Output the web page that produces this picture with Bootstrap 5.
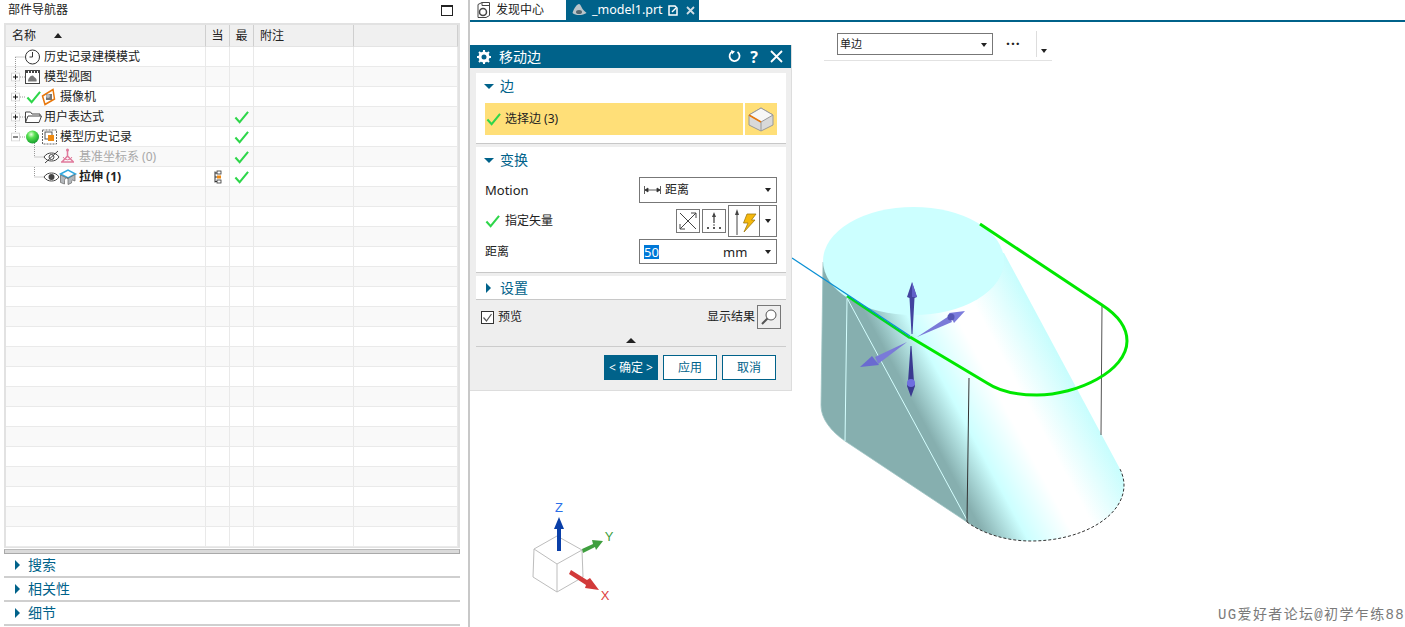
<!DOCTYPE html>
<html lang="zh">
<head>
<meta charset="utf-8">
<title>部件导航器</title>
<link href="https://cdn.jsdelivr.net/npm/bootstrap@5.3.0/dist/css/bootstrap.min.css" rel="stylesheet">
<style>
:root{--nx:#00628a;}
html,body{height:627px;overflow:hidden;background:#fff;}
body{font:12px/20px "Noto Sans","Noto Sans CJK SC",sans-serif;color:#222;}
.nav-pane{width:470px;height:627px;border-right:2px solid #c8c8c8;padding-left:4px;flex:none;}
.pane-head{flex:none;height:23px;width:456px;padding:0 0 3px 4px;}
.pane-max{width:12px;height:11px;border:1px solid #222;border-top-width:2px;margin-right:7px;}
.tree-box{flex:none;width:456px;border:2px solid #e2e2e2;border-bottom-width:1px;}
.tree-table{table-layout:fixed;width:452px;border-collapse:separate;border-spacing:0;margin:0;}
.tree-table th,.tree-table td{height:20px;padding:0;border:0;border-right:1px solid #e9e9e9;border-bottom:1px solid #eaeaea;font-weight:400;white-space:nowrap;overflow:hidden;vertical-align:middle;box-shadow:none;background:transparent;color:#222;}
.tree-table thead th{height:21px;padding-top:1px;background:#f0f0f0;border-right:1px solid #cfcfcf;border-bottom:1px solid #e4e4e4;text-align:center;}
.tree-table thead th.head-name{text-align:left;padding-left:6px;}
.tree-table thead th.head-note{text-align:left;padding-left:6px;}
.tree-table tbody tr:nth-child(even) td{background:#f9f9f9;}
.sort-up{display:inline-block;border:4px solid transparent;border-bottom:5px solid #222;border-top:0;margin-left:18px;vertical-align:2px;}
.tree-cell{display:flex;align-items:center;height:19px;}
.tree-cell svg,.cell-mid svg{display:block;flex:none;}
.cell-mid{display:flex;justify-content:center;align-items:center;height:19px;}
.muted-node{color:#a8a8a8;}
.strong-node{font-weight:700;}
.split-bar{flex:none;width:456px;height:5px;background:#dadada;border:1px solid #a9a9a9;border-top-color:#bbb;margin-top:1px;}
.fold-stack{width:456px;}
.fold-row{height:24px;border-bottom:2px solid #cfcfcf;color:var(--nx);font-size:14px;line-height:22px;padding-left:11px;gap:8px;}
.tri-right{display:inline-block;border:5px solid transparent;border-left:5px solid var(--nx);border-right:0;}
.tri-down{display:inline-block;border:5px solid transparent;border-top:5px solid var(--nx);border-bottom:0;}
.work-area{flex:1 1 auto;height:627px;position:relative;overflow:hidden;}
.tab-strip{height:22px;border-bottom:2px solid var(--nx);font-size:12px;line-height:20px;padding-left:6px;}
.tab-plain{width:90px;gap:4px;}
.tab-on{width:133px;height:20px;background:var(--nx);color:#fff;padding-left:6px;}
.tab-on .tab-name{margin-left:5px;width:76px;font-size:12.5px;}
.gfx-canvas{display:block;position:absolute;left:0;top:22px;width:935px;height:605px;}
.tool-float{position:absolute;left:354px;top:31px;width:228px;height:30px;border-bottom:1px solid #e2e2e2;}
.tool-select{position:absolute;left:13px;top:2px;width:156px;height:22px;border:1px solid #777;padding-left:2px;font-size:11px;line-height:20px;}
.caret-dn{position:absolute;border:3.5px solid transparent;border-top:4px solid #222;border-bottom:0;width:0;height:0;}
.tool-select .caret-dn{right:5px;top:9px;}
.tool-dots{position:absolute;left:182px;top:6px;width:16px;height:14px;font-size:14px;line-height:14px;letter-spacing:1px;font-weight:700;}
.tool-sep{position:absolute;left:212px;top:0;height:26px;width:1px;background:#ddd;}
.dlg{position:absolute;left:0;top:45px;width:322px;height:346px;background:#eee;border:1px solid #ddd;border-top:0;border-left:0;}
.dlg-title{height:23px;background:var(--nx);color:#fff;font-size:14px;padding:0 8px 0 7px;}
.dlg-title .t{margin-left:8px;}
.dlg-sec{margin:0 5px 0 6px;background:#fff;border-bottom:1px solid #c8c8c8;}
.dlg-sec-head{color:var(--nx);font-size:14px;height:26px;padding-left:8px;gap:6px;}
.sel-row{padding:4px 9px 0;height:44px;gap:2px;}
.sel-main{width:258px;height:32px;background:#ffdf78;padding-left:1px;gap:4px;}
.sel-btn{width:32px;height:32px;background:#ffdf78;}
.field-row{padding:0 9px;height:30px;}
.field-box{width:138px;height:26px;border:1px solid #777;position:relative;padding-left:4px;}
.field-box .caret-dn{right:5px;top:10px;}
.sel-text{background:#0078d7;color:#fff;font-size:13px;line-height:14px;padding:0;}
.unit-t{position:absolute;left:83px;font-size:13px;}
.vec-btn{width:24px;height:24px;border:1px solid #777;background:#fff;}
.vec-combo{width:49px;height:32px;border:1px solid #777;margin-left:2px;position:relative;}
.vec-combo .cut{position:absolute;left:30px;top:0;bottom:0;border-left:1px solid #777;}
.vec-combo .caret-dn{right:5px;top:13px;}
.dlg-foot{padding:5px 10px 0 11px;height:34px;}
.foot-side{height:24px;}
.check-box{width:13px;height:13px;border:1px solid #333;background:#fff;}
.show-btn{width:24px;height:24px;border:1px solid #777;background:#eee;margin-left:2px;}
.more-tri{height:12px;}
.more-tri i{display:block;border:5px solid transparent;border-bottom:5px solid #222;border-top:0;}
.foot-sep{margin:0 5px 0 6px;border-top:1px solid #ccc;}
.dlg-act{padding:8px 15px 0 0;gap:5px;}
.act-btn{width:54px;height:25px;border-radius:0;border:1px solid var(--nx);background:#fff;color:var(--nx);font-size:12px;line-height:23px;padding:0;}
.act-on{background:var(--nx);color:#fff;}
.brand-mark{position:absolute;right:0;bottom:2px;font:14px/20px "Liberation Mono","Noto Sans CJK SC",monospace;color:#7a7a7a;letter-spacing:1.35px;}
</style>
</head>
<body class="d-flex">

<svg width="0" height="0" class="position-absolute">
<defs>
<symbol id="tick" viewBox="0 0 16 14"><path d="M1.500 7.500 6 12.500 15 1.500" fill="none" stroke="#2ed64a" stroke-width="2.200"/></symbol>
<symbol id="plus-box" viewBox="0 0 9 9"><rect x=".5" y=".5" width="8" height="8" fill="#fff" stroke="#d4d4d4"/><path d="M2 4.500h5M4.500 2v5" stroke="#111"/></symbol>
<symbol id="minus-box" viewBox="0 0 9 9"><rect x=".5" y=".5" width="8" height="8" fill="#fff" stroke="#d4d4d4"/><path d="M2 4.500h5" stroke="#111"/></symbol>
<radialGradient id="ball" cx=".4" cy=".3" r=".8"><stop offset="0" stop-color="#e8ffe0"/><stop offset=".35" stop-color="#55e04f"/><stop offset="1" stop-color="#0a8f28"/></radialGradient>
<linearGradient id="solid" gradientUnits="userSpaceOnUse" x1="867" y1="317" x2="1001" y2="245"><stop offset="0" stop-color="#86afaf"/><stop offset=".24" stop-color="#ccffff"/><stop offset=".52" stop-color="#fff"/><stop offset=".66" stop-color="#fff"/><stop offset="1" stop-color="#c6fdfd"/></linearGradient>
</defs>
</svg>

<aside class="nav-pane d-flex flex-column">
  <div class="pane-head d-flex align-items-center justify-content-between"><span>部件导航器</span><span class="pane-max"></span></div>
  <div class="tree-box">
  <table class="table tree-table">
    <colgroup><col style="width:200px"><col style="width:24px"><col style="width:24px"><col style="width:100px"><col style="width:104px"></colgroup>
    <thead><tr><th class="head-name">名称<span class="sort-up"></span></th><th>当</th><th>最</th><th class="head-note">附注</th><th></th></tr></thead>
    <tbody>
      <tr><td><div class="tree-cell">
        <svg width="38" height="20"><path d="M9.500 10V20M9.500 10H19" stroke="#999" stroke-dasharray="1 1" fill="none"/><circle cx="26.500" cy="10" r="7" fill="#fff" stroke="#333"/><path d="M26.500 5v5h-3" fill="none" stroke="#333"/></svg><span>历史记录建模模式</span></div></td><td></td><td></td><td></td><td></td></tr>
      <tr><td><div class="tree-cell">
        <svg width="38" height="20"><path d="M9.500 0V6M14 10H19" stroke="#999" stroke-dasharray="1 1" fill="none"/><path d="M9.500 14V20" stroke="#999" stroke-dasharray="1 1"/><use href="#plus-box" x="5" y="5.500" width="9" height="9"/><rect x="19.500" y="3.500" width="14" height="13" fill="#fff" stroke="#444"/><path d="M20 5h13" stroke="#444" stroke-width="2" stroke-dasharray="2 1"/><path d="M22 14.500c0-3 2.500-6 4.500-6 1 0 1.500 1.500 3 2.500 1 1 1.500 2 1 3.500z" fill="#777"/></svg><span>模型视图</span></div></td><td></td><td></td><td></td><td></td></tr>
      <tr><td><div class="tree-cell">
        <svg width="54" height="20"><path d="M9.500 0V6M14 10H19M9.500 14V20" stroke="#999" stroke-dasharray="1 1" fill="none"/><use href="#plus-box" x="5" y="5.500" width="9" height="9"/><use href="#tick" x="20" y="3" width="15" height="14"/><path d="M36.500 9 47 2.500 48.500 12 39 17.500z" fill="#fff" stroke="#e8780c" stroke-width="1.500"/><rect x="40" y="7" width="6" height="6" fill="#777"/><circle cx="42" cy="9" r="2" fill="#bbb"/></svg><span>摄像机</span></div></td><td></td><td></td><td></td><td></td></tr>
      <tr><td><div class="tree-cell">
        <svg width="38" height="20"><path d="M9.500 0V6M14 10H19M9.500 14V20" stroke="#999" stroke-dasharray="1 1" fill="none"/><use href="#plus-box" x="5" y="5.500" width="9" height="9"/><path d="M19.500 15.500V5h5l1.500 2h8v2M19.500 15.500 22 9h13.500l-2.500 6.500z" fill="#fff" stroke="#444"/></svg><span>用户表达式</span></div></td><td></td><td><div class="cell-mid"><svg width="15" height="14"><use href="#tick" width="15" height="14"/></svg></div></td><td></td><td></td></tr>
      <tr><td><div class="tree-cell">
        <svg width="54" height="20"><path d="M9.500 0V6M14 10H19M28.500 16V20" stroke="#999" stroke-dasharray="1 1" fill="none"/><use href="#minus-box" x="5" y="5.500" width="9" height="9"/><circle cx="26.500" cy="10" r="6.500" fill="url(#ball)"/><rect x="36.500" y="3" width="14" height="14" fill="#fff" stroke="#666" stroke-dasharray="2 1"/><rect x="39" y="5" width="7" height="7" fill="#fff" stroke="#555"/><rect x="42" y="8" width="6" height="6" fill="#ef8a12"/></svg><span>模型历史记录</span></div></td><td></td><td><div class="cell-mid"><svg width="15" height="14"><use href="#tick" width="15" height="14"/></svg></div></td><td></td><td></td></tr>
      <tr><td><div class="tree-cell">
        <svg width="73" height="20"><path d="M28.500 0V10H38" stroke="#999" stroke-dasharray="1 1" fill="none"/><path d="M38 10c2-3 4.500-4 7.500-4s5.500 1 7.500 4c-2 3-4.500 4-7.500 4s-5.500-1-7.500-4z" fill="#fff" stroke="#444"/><circle cx="45.500" cy="10" r="2.500" fill="none" stroke="#444"/><path d="M39 16 52 4" stroke="#444"/><path d="M61.500 3v6M61.500 9 56 15M61.500 9l6 6M55 15h13" stroke="#e07a9c" stroke-width="1.500" fill="none"/><circle cx="61.500" cy="3" r="1.500" fill="#e07a9c"/><path d="M57 10a5 5 0 0 0 9 0" fill="none" stroke="#e07a9c"/></svg><span class="muted-node">基准坐标系 (0)</span></div></td><td></td><td><div class="cell-mid"><svg width="15" height="14"><use href="#tick" width="15" height="14"/></svg></div></td><td></td><td></td></tr>
      <tr><td><div class="tree-cell">
        <svg width="73" height="20"><path d="M28.500 0V10H38" stroke="#999" stroke-dasharray="1 1" fill="none"/><path d="M38 10c2-3 4.500-4 7.500-4s5.500 1 7.500 4c-2 3-4.500 4-7.500 4s-5.500-1-7.500-4z" fill="#fff" stroke="#444"/><circle cx="45.500" cy="10" r="3" fill="#444"/><path d="M54.500 7 62 3l7.500 4-7.500 4z" fill="#fff" stroke="#2ea8e0" stroke-width="1.500"/><path d="M54.500 8v7.500l4 1.500v-3.500c0-2 3.500-4 3.500-2v6l3.500-1.500c0-2 .5-3 1-3l2.500 1v-6.500L62 11.500z" fill="#b4b8bc" stroke="#666" stroke-width=".7"/></svg><span class="strong-node">拉伸 (1)</span></div></td><td><div class="cell-mid"><svg width="8" height="14"><path d="M1 1.500V12.500M1 3h2M1 7h2M1 11.500h2" stroke="#333" fill="none"/><rect x="3" y="1" width="4" height="3" fill="#fff" stroke="#333" stroke-width=".8"/><rect x="3" y="5.500" width="4" height="3" fill="#ef8a12"/><rect x="3" y="10" width="4" height="3" fill="#fff" stroke="#333" stroke-width=".8"/></svg></div></td><td><div class="cell-mid"><svg width="15" height="14"><use href="#tick" width="15" height="14"/></svg></div></td><td></td><td></td></tr>
      <tr><td></td><td></td><td></td><td></td><td></td></tr><tr><td></td><td></td><td></td><td></td><td></td></tr>
      <tr><td></td><td></td><td></td><td></td><td></td></tr><tr><td></td><td></td><td></td><td></td><td></td></tr>
      <tr><td></td><td></td><td></td><td></td><td></td></tr><tr><td></td><td></td><td></td><td></td><td></td></tr>
      <tr><td></td><td></td><td></td><td></td><td></td></tr><tr><td></td><td></td><td></td><td></td><td></td></tr>
      <tr><td></td><td></td><td></td><td></td><td></td></tr><tr><td></td><td></td><td></td><td></td><td></td></tr>
      <tr><td></td><td></td><td></td><td></td><td></td></tr><tr><td></td><td></td><td></td><td></td><td></td></tr>
      <tr><td></td><td></td><td></td><td></td><td></td></tr><tr><td></td><td></td><td></td><td></td><td></td></tr>
      <tr><td></td><td></td><td></td><td></td><td></td></tr><tr><td></td><td></td><td></td><td></td><td></td></tr>
      <tr><td></td><td></td><td></td><td></td><td></td></tr><tr><td></td><td></td><td></td><td></td><td></td></tr>
    </tbody>
  </table>
  </div>
  <div class="split-bar"></div>
  <div class="fold-stack">
    <div class="fold-row d-flex align-items-center"><span class="tri-right"></span><span>搜索</span></div>
    <div class="fold-row d-flex align-items-center"><span class="tri-right"></span><span>相关性</span></div>
    <div class="fold-row d-flex align-items-center"><span class="tri-right"></span><span>细节</span></div>
  </div>
</aside>

<main class="work-area">
  <div class="tab-strip d-flex">
    <div class="tab-plain d-flex align-items-center">
      <svg width="16" height="16" viewBox="0 0 16 16"><path d="M2 2.500 6 .5h7.500v13L10 15.500H2z" fill="#fff" stroke="#444"/><path d="M6 .5v3h7.500" fill="none" stroke="#444"/><circle cx="7" cy="10" r="3.500" fill="none" stroke="#444" stroke-width="1.500"/></svg>
      <span>发现中心</span>
    </div>
    <div class="tab-on d-flex align-items-center">
      <svg width="15" height="14" viewBox="0 0 15 14"><path d="M.5 10C2 5 5 1 7 1c1.500 0 2.500 3.500 4 5.500 1 1.500 3 2.500 3.500 3.500-3 2-10 3.500-14 0z" fill="#b9c4c9"/><ellipse cx="7" cy="9" rx="3" ry="2" fill="#55666e"/></svg>
      <span class="tab-name">_model1.prt</span>
      <svg width="10" height="11" viewBox="0 0 10 11"><path d="M1 1h6l2 2v7H1z" fill="none" stroke="#fff" stroke-width="1.500"/><path d="M4 7l4-4" stroke="#fff" stroke-width="1.500"/></svg>
      <svg class="ms-2" width="9" height="9" viewBox="0 0 9 9"><path d="M1 1l7 7M8 1 1 8" stroke="#cfdde4" stroke-width="1.800"/></svg>
    </div>
  </div>

  <svg class="gfx-canvas" viewBox="470 22 935 605">
    <path d="M823 262 821 405c0 14 10 26 24 36L967 522c16 12 40 19 64 19 50 0 93-24 93-56 0-6-2-12-4-16L1004 253 914 240z" fill="url(#solid)"/>
    <path d="M823 262 821 405c0 14 10 26 24 36L967 522" fill="none" stroke="#9dc3c3" stroke-width=".8"/>
    <ellipse cx="913.500" cy="261" rx="90.500" ry="54" fill="#ccffff"/>
    <path d="M847 299 845 441M847 298 967 520" stroke="#d5ffff" stroke-width="1" fill="none"/>
    <path d="M969 378 967 522" stroke="#333" stroke-width="1"/>
    <path d="M1102 306 1101 435" stroke="#555" stroke-width="1"/>
    <path d="M967 522c16 12 40 19 64 19 50 0 93-24 93-56 0-6-2-12-4-16" fill="none" stroke="#333" stroke-width="1" stroke-dasharray="3 2"/>
    <path d="M980 224 1102 305c17 11 25 23 25 36 0 30-50 54-90 54-22 0-38-4-50-12L910 337" fill="none" stroke="#00e800" stroke-width="3"/>
    <path d="M847 296 910 338" fill="none" stroke="#00d820" stroke-width="2.600"/>
    <path d="M792 258 910 336" fill="none" stroke="#0a90d4" stroke-width="1.300"/>
    <path d="M911.500 334 909.500 298 907 297 912 282 917 297 914.500 298 912.500 334z" fill="#43439f"/>
    <path d="M912 282 917 297 912 297z" fill="#6060c8"/>
    <path d="M910.500 346 908 382 907 386 911 397 915 386 914 382 911.500 346z" fill="#3a3a90"/>
    <circle cx="911" cy="383" r="4" fill="#6f6fe0"/>
    <path d="M917 337 949 316 952 322z" fill="#7a7ad8"/>
    <path d="M965 311 949 313 954 323z" fill="#7c7cdc"/>
    <circle cx="951" cy="317" r="3.500" fill="#5757b5"/>
    <path d="M907 342 875 357 878 364z" fill="#7a7ad8"/>
    <path d="M860 367 872 356 879 365z" fill="#6a6ad0"/>

    <path d="M557 536 534 549 533 577 557 592 583 577 582 550zM534 549 557 564 582 550M557 564V592" fill="#fff" stroke="#bdbdbd" stroke-width="1"/>
    <path d="M557 551V529H554L559 517 564 529H561V551z" fill="#0a3fa8"/>
    <path d="M582 549 593 544 592 540 603 541 596 550 595 547 583 553z" fill="#3f9f3f"/>
    <path d="M571 570 587 580 590 578 599 590 585 588 586 585 569 574z" fill="#d23a3a"/>
    <text x="559" y="512" text-anchor="middle" font-family="Liberation Sans" font-size="13" fill="#2a6fe8">Z</text>
    <text x="609" y="541" text-anchor="middle" font-family="Liberation Sans" font-size="13" fill="#3f9f3f">Y</text>
    <text x="605" y="600" text-anchor="middle" font-family="Liberation Sans" font-size="13" fill="#dc4040">X</text>
  </svg>

  <div class="tool-float">
    <div class="tool-select">单边<span class="caret-dn"></span></div>
    <div class="tool-dots">···</div>
    <div class="tool-sep"></div>
    <span class="caret-dn" style="left:217px;top:18px"></span>
  </div>

  <section class="dlg">
    <div class="dlg-title d-flex align-items-center">
      <svg width="14" height="14" viewBox="0 0 14 14"><circle cx="7" cy="7" r="4" fill="none" stroke="#fff" stroke-width="3"/><path d="M7 0v3M7 11v3M0 7h3M11 7h3M2 2l2 2M10 10l2 2M12 2l-2 2M4 10l-2 2" stroke="#fff" stroke-width="2"/></svg>
      <span class="t flex-grow-1">移动边</span>
      <svg width="13" height="13" viewBox="0 0 13 13"><path d="M4.500 1.500A5 5 0 1 0 9.500 2" fill="none" stroke="#fff" stroke-width="1.800"/><path d="M3 0 7 1.500 4 4.500z" fill="#fff"/></svg>
      <span class="fw-bold text-center ms-2" style="font-size:16px;width:10px;margin-right:11px">?</span>
      <svg width="13" height="13" viewBox="0 0 13 13"><path d="M1 1l11 11M12 1 1 12" stroke="#fff" stroke-width="1.800"/></svg>
    </div>
    <div class="dlg-sec" style="height:71px;margin-top:5px">
      <div class="dlg-sec-head d-flex align-items-center"><span class="tri-down"></span><span>边</span></div>
      <div class="sel-row d-flex">
        <div class="sel-main d-flex align-items-center">
          <svg width="15" height="14"><use href="#tick" width="15" height="14"/></svg><span>选择边 (3)</span>
        </div>
        <div class="sel-btn d-flex align-items-center justify-content-center">
          <svg width="26" height="26" viewBox="0 0 26 26"><path d="M13 2 25 9v10L13 25 1 19V9z" fill="#d9d9d9" stroke="#999"/><path d="M13 2 25 9 13 16 1 9z" fill="#f7f7f7" stroke="#999"/><path d="M13 16v9" stroke="#999"/><path d="M1 9l12 7" stroke="#e8780c" stroke-width="1.500"/></svg>
        </div>
      </div>
    </div>
    <div class="dlg-sec" style="height:126px;margin-top:3px">
      <div class="dlg-sec-head d-flex align-items-center"><span class="tri-down"></span><span>变换</span></div>
      <div class="field-row d-flex align-items-center justify-content-between" style="padding-top:4px">
        <span style="font-size:13px">Motion</span>
        <div class="field-box d-flex align-items-center">
          <svg width="17" height="8" viewBox="0 0 17 8" class="me-1"><path d="M.5 0v8M16.500 0v8M1 4h15M1 4l3-2v4zM16 4l-3-2v4z" stroke="#333" stroke-width=".8" fill="#333"/></svg><span>距离</span><span class="caret-dn"></span>
        </div>
      </div>
      <div class="field-row d-flex align-items-center" style="height:36px">
        <svg width="15" height="14" style="margin-right:5px"><use href="#tick" width="15" height="14"/></svg><span class="flex-grow-1">指定矢量</span>
        <div class="vec-btn d-flex align-items-center justify-content-center"><svg width="20" height="20" viewBox="0 0 20 20"><path d="M2 18 18 2M18 2h-5M18 2v5M2 2l16 16M2 18h5M2 18v-5" fill="none" stroke="#444" stroke-width="1"/></svg></div>
        <div class="vec-btn d-flex align-items-center justify-content-center" style="margin-left:2px"><svg width="20" height="20" viewBox="0 0 20 20"><path d="M10 3v9" stroke="#444" stroke-width="1.300"/><path d="M10 1 12 6H8z" fill="#444"/><path d="M3 17h2M9 17h2M15 17h2M10 13.500v1" stroke="#222" stroke-width="1.500"/></svg></div>
        <div class="vec-combo d-flex align-items-center">
          <svg width="29" height="30" viewBox="0 0 29 30"><path d="M8 8v21" stroke="#444" stroke-width="1"/><path d="M8 3 10 9H6z" fill="#444"/><path d="M18 8h9l-4.500 6H26l-11 12 4-9h-4.500z" fill="#f5b80c" stroke="#a07b10" stroke-width=".8"/></svg>
          <span class="cut"></span><span class="caret-dn"></span>
        </div>
      </div>
      <div class="field-row d-flex align-items-start justify-content-between" style="height:26px">
        <span style="line-height:25px">距离</span>
        <div class="field-box d-flex align-items-center" style="height:25px"><span class="sel-text">50</span><span class="unit-t">mm</span><span class="caret-dn"></span></div>
      </div>
    </div>
    <div class="dlg-sec" style="height:24px;margin-top:3px">
      <div class="dlg-sec-head d-flex align-items-center" style="height:23px;padding-left:10px;gap:9px"><span class="tri-right"></span><span>设置</span></div>
    </div>
    <div class="dlg-foot d-flex align-items-start justify-content-between">
      <div class="foot-side d-flex align-items-center"><span class="check-box d-flex align-items-center justify-content-center"><svg width="11" height="11" viewBox="0 0 11 11"><path d="M1.500 5.500 4.500 9 9.500 2" fill="none" stroke="#555" stroke-width="1.200"/></svg></span><span class="ms-1">预览</span></div>
      <div class="foot-side d-flex align-items-center"><span>显示结果</span><span class="show-btn d-flex align-items-center justify-content-center"><svg width="18" height="18" viewBox="0 0 18 18"><circle cx="11" cy="7" r="5" fill="#fff" stroke="#555"/><path d="M7.500 10.500 2 16" stroke="#555" stroke-width="2"/></svg></span></div>
    </div>
    <div class="more-tri d-flex justify-content-center align-items-center"><i></i></div>
    <div class="foot-sep"></div>
    <div class="dlg-act d-flex justify-content-end">
      <button type="button" class="btn act-btn act-on">&lt;&nbsp;确定&nbsp;&gt;</button>
      <button type="button" class="btn act-btn">应用</button>
      <button type="button" class="btn act-btn">取消</button>
    </div>
  </section>

  <div class="brand-mark">UG爱好者论坛@初学乍练88</div>
</main>

<script src="https://cdn.jsdelivr.net/npm/bootstrap@5.3.0/dist/js/bootstrap.bundle.min.js"></script>
</body>
</html>
